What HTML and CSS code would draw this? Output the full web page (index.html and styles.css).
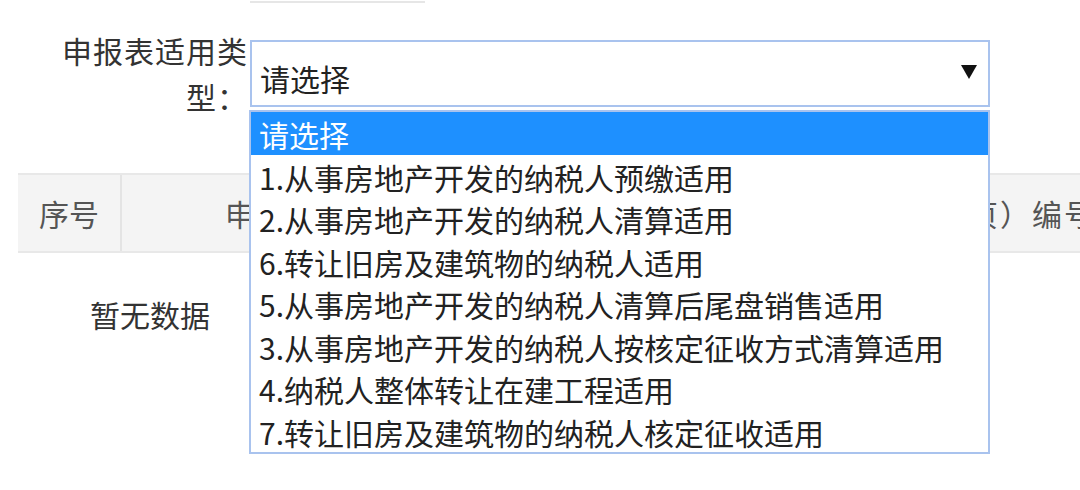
FILE: index.html
```html
<!DOCTYPE html>
<html lang="zh-CN">
<head>
<meta charset="utf-8">
<title>申报表适用类型</title>
<link rel="stylesheet" href="styles.css">
</head>
<body>
<div class="page">
  <div class="top-stub"></div>
  <div class="form-row">
    <label class="form-label">申报表适用类型：</label>
    <div class="select-wrap">
      <div class="select">
        <span class="select-value">请选择</span>
        <span class="select-arrow"></span>
      </div>
      <ul class="dropdown">
        <li class="option selected">请选择</li>
        <li class="option">1.从事房地产开发的纳税人预缴适用</li>
        <li class="option">2.从事房地产开发的纳税人清算适用</li>
        <li class="option">6.转让旧房及建筑物的纳税人适用</li>
        <li class="option">5.从事房地产开发的纳税人清算后尾盘销售适用</li>
        <li class="option">3.从事房地产开发的纳税人按核定征收方式清算适用</li>
        <li class="option">4.纳税人整体转让在建工程适用</li>
        <li class="option">7.转让旧房及建筑物的纳税人核定征收适用</li>
      </ul>
    </div>
  </div>
  <div class="table">
    <div class="thead">
      <div class="th th-index">序号</div>
      <div class="th th-name">申报表名称</div>
      <div class="th th-code">申报表（页）编号</div>
    </div>
    <div class="empty">暂无数据</div>
  </div>
</div>
</body>
</html>
```
FILE: styles.css
```css
html, body {
  margin: 0;
  padding: 0;
  background: #ffffff;
  overflow: hidden;
}

body {
  font-family: "Noto Sans CJK SC", "Noto Sans", sans-serif;
  color: #333333;
  width: 1080px;
  height: 490px;
}

.page {
  position: relative;
}

.top-stub {
  margin-left: 250px;
  width: 175px;
  height: 1px;
  border-bottom: 2px solid #e6e6e6;
}

.form-row {
  display: flex;
  align-items: flex-start;
  margin-top: 24px;
  position: relative;
  z-index: 2;
}

.form-label {
  width: 186px;
  margin-left: 62px;
  font-size: 30px;
  letter-spacing: 1px;
  line-height: 46px;
  text-align: right;
  color: #333333;
}

.select-wrap {
  position: relative;
  margin-left: 2px;
  margin-top: 13px;
  width: 740px;
}

.select {
  box-sizing: border-box;
  height: 67px;
  border: 2px solid #a9c3ee;
  background: #ffffff;
  display: flex;
  align-items: center;
  padding: 9px 11px 0 8px;
}

.select-value {
  flex: 1;
  font-size: 30px;
  color: #222222;
}

.select-arrow {
  align-self: flex-start;
  margin-top: 14px;
  width: 0;
  height: 0;
  border-left: 8px solid transparent;
  border-right: 8px solid transparent;
  border-top: 14px solid #111111;
}

.dropdown {
  position: absolute;
  top: 70px;
  left: -1px;
  width: 741px;
  box-sizing: border-box;
  margin: 0;
  padding: 0;
  list-style: none;
  background: #ffffff;
  border: 2px solid #a9c3ee;
}

.option {
  height: 42.5px;
  line-height: 44px;
  padding-left: 8px;
  font-size: 30px;
  color: #222222;
  white-space: nowrap;
}

.option.selected {
  background: #1e90ff;
  color: #ffffff;
}

.table {
  margin-top: 54px;
  margin-left: 18px;
}

.thead {
  display: flex;
  height: 76px;
  background: #f4f4f4;
  border-top: 2px solid #e8e8e8;
  border-bottom: 2px solid #e8e8e8;
  white-space: nowrap;
  overflow: hidden;
}

.th {
  display: flex;
  align-items: center;
  font-size: 30px;
  color: #555555;
  flex-shrink: 0;
}

.th-index {
  width: 102px;
  justify-content: center;
  border-right: 2px solid #e4e4e4;
}

.th-name {
  width: 718px;
  padding-left: 103px;
  box-sizing: border-box;
}

.th-code {
  letter-spacing: 2px;
}

.empty {
  margin-top: 40px;
  margin-left: 72px;
  font-size: 30px;
  line-height: 42px;
  color: #333333;
}
```
